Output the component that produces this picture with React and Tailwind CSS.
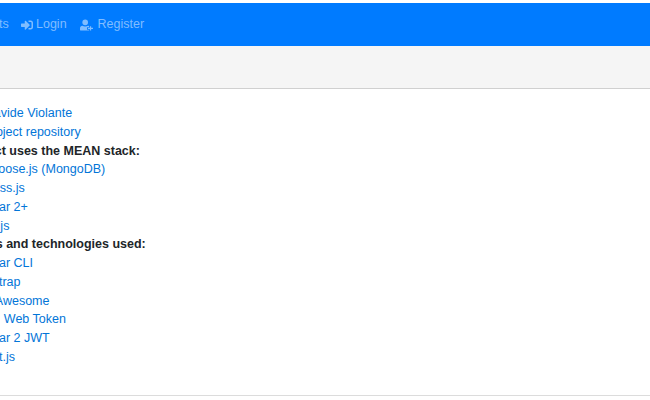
import React from "react";
import { FaSignInAlt } from "react-icons/fa";

const stack = ["Mongoose.js (MongoDB)", "Express.js", "Angular 2+", "Node.js"];
const tools = ["Angular CLI", "Bootstrap", "Font Awesome", "JSON Web Token", "Angular 2 JWT", "Bcrypt.js"];

function App() {
  return (
    <div className="h-[400px] w-[650px] overflow-hidden bg-white pt-[3px] font-['Liberation_Sans',sans-serif] text-[12.5px] leading-[18.75px] text-[#212529]">
      <nav className="flex h-[43px] items-center bg-[#007bff] text-[#80bdff]">
        <div className="-ml-[17px] flex items-center">
          <span className="w-[38px]">Cats</span>
          <a className="flex items-center">
            <FaSignInAlt className="mr-[3px] h-[12px] w-[12px]" />
            Login
          </a>
          <a className="ml-[13px] flex items-center">
            <svg viewBox="0 0 14 12" fill="currentColor" className="mr-[5px] h-[12px] w-[13px]">
              <circle cx="5.6" cy="3.2" r="3" />
              <path d="M0 11V9.4C0 7.8 1.1 6.8 2.6 6.8C3.4 7.3 4.4 7.6 5.6 7.6C6.8 7.6 7.8 7.3 8.6 6.8C9 6.8 9.4 6.9 9.7 7.1V8.4H7.6V11.2H9.7V12H1C0.4 12 0 11.6 0 11Z" />
              <path d="M10.6 7.4H12V9H14V10.4H12V12H10.6V10.4H8.6V9H10.6Z" />
            </svg>
            Register
          </a>
        </div>
      </nav>
      <div className="h-[43px] border-b border-[#d0d0d0] bg-[#f5f5f5]" />
      <div className="-ml-[62px] flex h-[307px] flex-col border-b border-[#dcdcdc] pt-[15px]">
        <p className="ml-[3px]">
          Author: <a className="text-[#0275d8]">Davide Violante</a>
        </p>
        <p className="ml-[3px]">
          Github: <a className="text-[#0275d8]">project repository</a>
        </p>
        <p className="-ml-[3px] font-bold">This project uses the MEAN stack:</p>
        <ul className="pl-[29px] text-[#0275d8]">
          {stack.map((item) => (
            <li key={item}>{item}</li>
          ))}
        </ul>
        <p className="-ml-[2px] font-bold">Other tools and technologies used:</p>
        <ul className="pl-[29px] text-[#0275d8]">
          {tools.map((item) => (
            <li key={item}>{item}</li>
          ))}
        </ul>
      </div>
    </div>
  );
}

export default App;
